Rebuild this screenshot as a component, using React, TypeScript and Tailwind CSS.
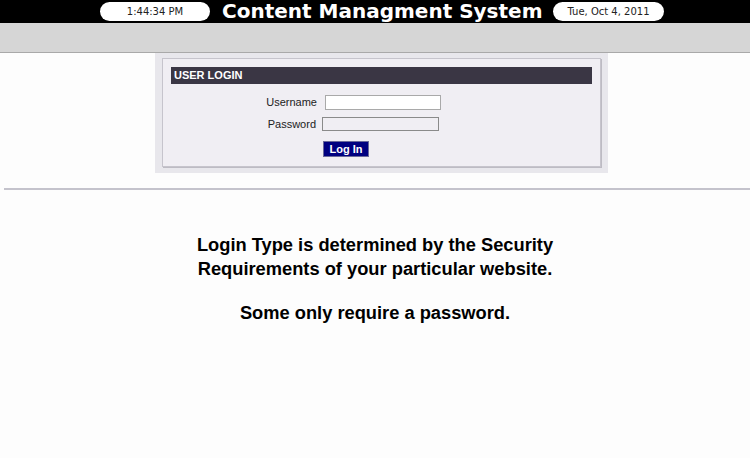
export default function App() {
  return (
    <div className="min-h-[458px] w-[750px] bg-[#fdfdfd] font-['Liberation_Sans',Arial,sans-serif]">
      <header className="flex h-[23px] items-center justify-center bg-black">
        <div className="ml-[100px] flex h-[19px] w-[110px] items-center justify-center rounded-full bg-white font-['DejaVu_Sans',Verdana,sans-serif] text-[10px] text-[#222]">
          1:44:34 PM
        </div>
        <h1 className="ml-[12px] w-[331px] whitespace-nowrap font-['DejaVu_Sans',Verdana,sans-serif] text-[20px] leading-[23px] font-bold text-white">
          Content Managment System
        </h1>
        <div className="flex h-[19px] w-[111px] items-center justify-center rounded-full bg-white font-['DejaVu_Sans',Verdana,sans-serif] text-[10px] text-[#222]">
          Tue, Oct 4, 2011
        </div>
        <div className="flex-1" />
      </header>
      <div className="h-[30px] border-b border-[#a9a9a9] bg-[#d6d6d6]" />

      <div className="ml-[155px] w-[453px] bg-[#e8e7ec] px-[7px] pt-[5px] pb-[6px]">
        <div className="border border-[#c6c4cc] bg-[#f0eef3] px-[8px] pt-[8px] pb-[9px] shadow-[1px_1px_0_#bdbbc3]">
          <div className="h-[17px] bg-[#3a3644] pl-[3px] text-[11px] leading-[17px] font-bold text-white">
            USER LOGIN
          </div>
          <div className="mt-[11px] flex items-center">
            <span className="w-[146px] text-right text-[11px] leading-[15px] text-[#222]">Username</span>
            <input
              className="ml-[8px] h-[15px] w-[116px] border border-[#a9a9a9] bg-white outline-none"
              autoFocus
            />
          </div>
          <div className="mt-[7px] flex items-center">
            <span className="w-[145px] text-right text-[11px] leading-[14px] text-[#222]">Password</span>
            <div className="ml-[6px] h-[14px] w-[117px] border border-[#8a8a8a] bg-[#f0eef3]" />
          </div>
          <div className="mt-[10px] flex pl-[152px]">
            <button className="h-[16px] w-[46px] border border-[#6a6a9a] bg-[#000080] text-[11px] leading-[14px] font-bold text-white">
              Log In
            </button>
          </div>
        </div>
      </div>

      <div className="mt-[15px] ml-[4px] h-[2px] bg-[#c4c3cc]" />

      <div className="mt-[43px] text-center text-[18.3px] font-bold text-black">
        <p className="leading-[24px]">
          Login Type is determined by the Security
          <br />
          Requirements of your particular website.
        </p>
        <p className="mt-[20px] leading-[24px]">Some only require a password.</p>
      </div>
    </div>
  );
}
